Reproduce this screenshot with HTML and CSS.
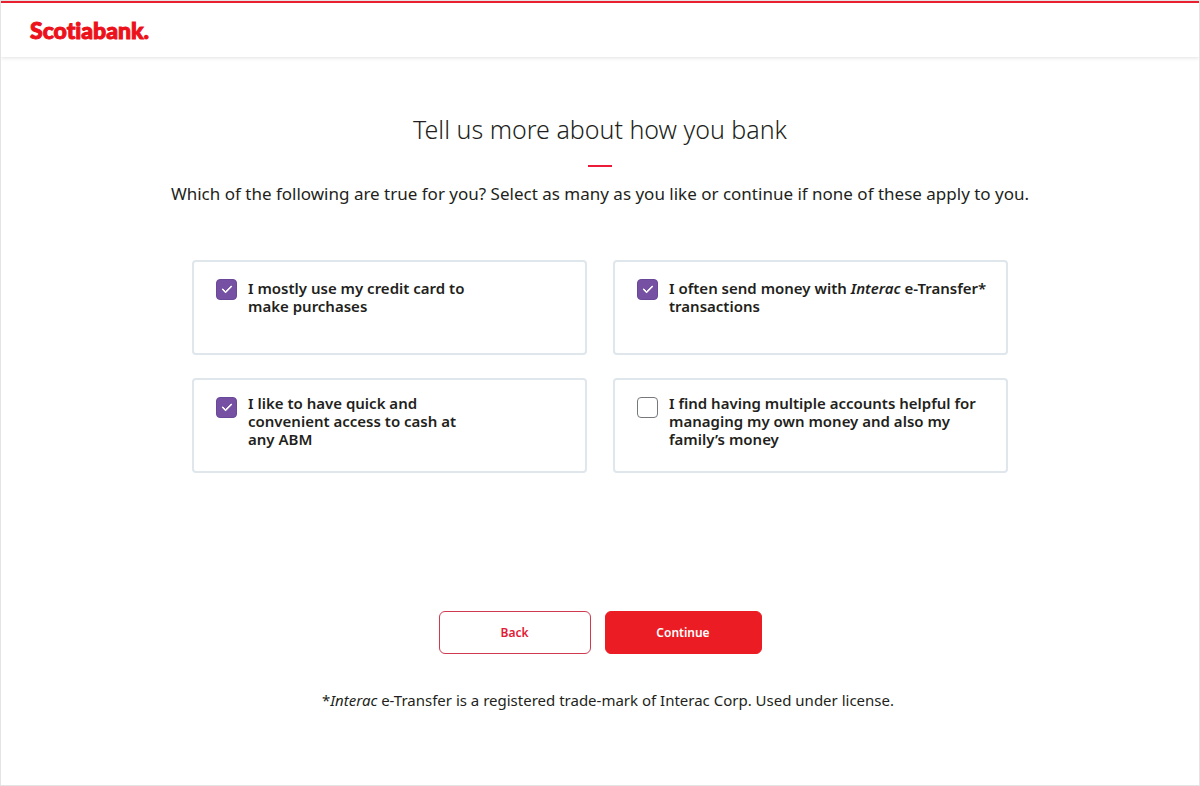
FILE: index.html
```html
<!DOCTYPE html>
<html lang="en">
<head>
    <meta charset="UTF-8">
    <meta name="viewport" content="width=device-width, initial-scale=1.0">
    <title>Scotiabank</title>
    <link rel="stylesheet" href="styles.css">
</head>
<body>

    <header class="header">
        <a class="logo" href="#">Scotiabank.</a>
    </header>

    <main class="content">
        <h1>Tell us more about how you bank</h1>
        <hr class="divider">
        <p class="intro">Which of the following are true for you? Select as many as you like or continue if none of these apply to you.</p>

        <form>
            <div class="options">
                <label class="option short">
                    <input type="checkbox" name="credit" checked>
                    <span>I mostly use my credit card to make purchases</span>
                </label>
                <label class="option">
                    <input type="checkbox" name="transfer" checked>
                    <span>I often send money with <em>Interac</em> e-Transfer* transactions</span>
                </label>
                <label class="option short tall">
                    <input type="checkbox" name="cash" checked>
                    <span>I like to have quick and convenient access to cash at any ABM</span>
                </label>
                <label class="option tall">
                    <input type="checkbox" name="accounts">
                    <span>I find having multiple accounts helpful for managing my own money and also my family’s money</span>
                </label>
            </div>

            <div class="actions">
                <button class="btn back-btn" type="button">Back</button>
                <button class="btn continue-btn" type="submit">Continue</button>
            </div>
        </form>

        <p class="legal">*<em>Interac</em> e-Transfer is a registered trade-mark of Interac Corp. Used under license.</p>
    </main>

</body>
</html>
```
FILE: styles.css
```css
* {
    box-sizing: border-box;
}

body {
    margin: 0;
    min-height: 100vh;
    border: 1px solid #e4e4e4;
    background: white;
    color: #231f20;
    font-family: "Noto Sans", "Open Sans", sans-serif;
}

.header {
    display: flex;
    align-items: center;
    height: 56px;
    padding: 0 29px;
    border-top: 2px solid #e8202f;
    box-shadow: 0 1px 4px rgba(0, 0, 0, 0.12);
}

.logo {
    color: #ec111a;
    font-family: Lato, sans-serif;
    font-size: 23px;
    font-weight: 900;
    font-variant-ligatures: none;
    text-decoration: none;
    -webkit-text-stroke: 1px #ec111a;
}

.content {
    display: flex;
    flex-direction: column;
    align-items: center;
    padding: 54px 20px 20px;
    text-align: center;
}

h1 {
    margin: 0;
    font-size: 25px;
    font-weight: 300;
    line-height: 36px;
}

.divider {
    width: 24px;
    height: 2px;
    margin: 18px 0 15px;
    border: none;
    background: #ed1b3a;
}

.intro {
    margin: 0 0 54px;
    font-size: 17px;
    line-height: 24px;
}

form {
    width: 100%;
    max-width: 816px;
}

.options {
    display: grid;
    grid-template-columns: 1fr 1fr;
    gap: 23px 26px;
    text-align: left;
}

.option {
    display: flex;
    align-items: flex-start;
    gap: 11px;
    min-height: 95px;
    padding: 17px 8px 16px 22px;
    border: 2px solid #dfe6ec;
    border-radius: 4px;
    font-size: 15px;
    font-weight: 600;
    line-height: 18px;
    cursor: pointer;
}

.option.short span {
    max-width: 232px;
}

.option.tall {
    padding-top: 14px;
}

.option.tall input {
    margin-top: 3px;
}

.option input {
    appearance: none;
    flex: none;
    width: 21px;
    height: 21px;
    margin: 0;
    border: 1px solid #77787b;
    border-radius: 4px;
    background: white;
    cursor: pointer;
}

.option input:checked {
    display: grid;
    place-items: center;
    border-color: #6a4799;
    background: #7550a3;
}

/* white tick */
.option input:checked::before {
    content: "";
    width: 8px;
    height: 4px;
    margin-bottom: 3px;
    border-left: 2px solid white;
    border-bottom: 2px solid white;
    border-radius: 1px;
    transform: rotate(-45deg);
}

.actions {
    display: flex;
    justify-content: center;
    gap: 14px;
    margin-top: 138px;
}

.btn {
    height: 43px;
    border: 1px solid #ec1c24;
    border-radius: 6px;
    font-family: inherit;
    font-size: 12px;
    font-weight: 600;
    cursor: pointer;
}

.back-btn {
    width: 152px;
    border-color: #cf3a50;
    background: white;
    color: #e31b35;
}

.continue-btn {
    width: 157px;
    background: #ec1c24;
    color: white;
}

.legal {
    margin: 36px 0 0;
    padding-left: 16px;
    font-size: 15px;
    line-height: 20px;
}

@media (max-width: 700px) {
    .options {
        grid-template-columns: 1fr;
    }
}
```
